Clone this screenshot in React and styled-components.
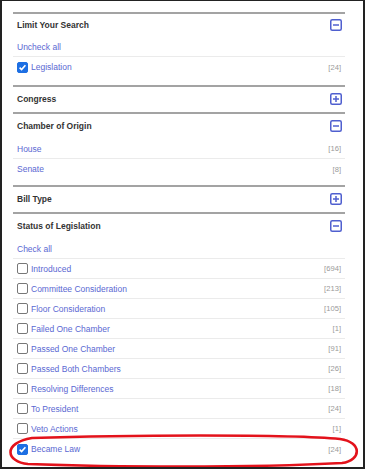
import React from "react";
import styled, { createGlobalStyle } from "styled-components";

const sections = [
  {
    title: "Limit Your Search",
    open: true,
    action: "Uncheck all",
    items: [{ label: "Legislation", count: 24, checked: true }],
    tight: true,
  },
  { title: "Congress", open: false },
  {
    title: "Chamber of Origin",
    open: true,
    items: [
      { label: "House", count: 16 },
      { label: "Senate", count: 8 },
    ],
    plain: true,
  },
  { title: "Bill Type", open: false },
  {
    title: "Status of Legislation",
    open: true,
    action: "Check all",
    items: [
      { label: "Introduced", count: 694 },
      { label: "Committee Consideration", count: 213 },
      { label: "Floor Consideration", count: 105 },
      { label: "Failed One Chamber", count: 1 },
      { label: "Passed One Chamber", count: 91 },
      { label: "Passed Both Chambers", count: 26 },
      { label: "Resolving Differences", count: 18 },
      { label: "To President", count: 24 },
      { label: "Veto Actions", count: 1 },
      { label: "Became Law", count: 24, checked: true },
    ],
  },
];

const ToggleIcon = ({ open }) => (
  <svg width="12" height="12" viewBox="0 0 12 12">
    <rect x="0.75" y="0.75" width="10.5" height="10.5" rx="1.5" fill="#fff" stroke="#4f5fcf" strokeWidth="1.5" />
    <path d="M3 6h6" stroke="#4f5fcf" strokeWidth="1.5" />
    {!open && <path d="M6 3v6" stroke="#4f5fcf" strokeWidth="1.5" />}
  </svg>
);

const App = () => {
  return (
    <>
      <GlobalStyle />
      <Frame>
        <Panel>
          {sections.map((s) => (
            <Section key={s.title}>
              <Header tight={s.tight}>
                <Title>{s.title}</Title>
                <ToggleIcon open={s.open} />
              </Header>
              {s.open && (
                <List tight={s.tight}>
                  {s.action && (
                    <Row>
                      <Link>{s.action}</Link>
                    </Row>
                  )}
                  {s.items.map((it) => (
                    <Row key={it.label}>
                      <Label>
                        {!s.plain && (
                          <Box checked={it.checked}>
                            {it.checked && (
                              <svg width="9" height="9" viewBox="0 0 9 9">
                                <path d="M1.6 4.6l2 2 3.8-4.4" fill="none" stroke="#fff" strokeWidth="1.6" />
                              </svg>
                            )}
                          </Box>
                        )}
                        <Link>{it.label}</Link>
                      </Label>
                      <Count>[{it.count}]</Count>
                    </Row>
                  ))}
                </List>
              )}
            </Section>
          ))}
        </Panel>
        <Mark viewBox="0 0 365 469">
          <path
            d="M32 438 C 120 435 290 434 340 439 C 362 442 362 460 342 463 C 250 468 110 467 28 464 C 6 462 2 443 32 438 Z"
            fill="none"
            stroke="#e3121b"
            strokeWidth="2.6"
          />
        </Mark>
      </Frame>
    </>
  );
};

export default App;

const GlobalStyle = createGlobalStyle`
  body {
    margin: 0;
    background: #fff;
    font-family: "Liberation Sans", Arial, sans-serif;
  }
`;

const Mark = styled.svg`
  position: absolute;
  left: -2px;
  top: -1px;
  width: 365px;
  height: 469px;
  pointer-events: none;
`;

const Count = styled.span`
  font-size: 7.6px;
  color: #9a9a9a;
`;

const Link = styled.span`
  font-size: 8.5px;
  color: #5a68d2;
`;

const Box = styled.span`
  width: 11px;
  height: 11px;
  box-sizing: border-box;
  border-radius: 2px;
  border: 1px solid ${(p) => (p.checked ? "#1d6fe3" : "#777")};
  background: ${(p) => (p.checked ? "#1d6fe3" : "#fff")};
  display: flex;
  align-items: center;
  justify-content: center;
`;

const Label = styled.div`
  display: flex;
  align-items: center;
  gap: 3px;
`;

const Row = styled.div`
  height: 20px;
  box-sizing: border-box;
  display: flex;
  align-items: center;
  justify-content: space-between;
  padding: 0 4px;
  border-bottom: 1px solid #ebebeb;

  &:last-child {
    border-bottom: none;
  }
`;

const List = styled.div`
  padding-bottom: ${(p) => (p.tight ? "8px" : "6px")};
`;

const Title = styled.div`
  font-size: 8.5px;
  font-weight: bold;
  color: #333;
`;

const Header = styled.div`
  height: ${(p) => (p.tight ? "23px" : "25px")};
  box-sizing: border-box;
  display: flex;
  align-items: center;
  justify-content: space-between;
  padding: 0 3px 1px 4px;
`;

const Section = styled.div`
  border-top: 2px solid #a3a3a3;
`;

const Panel = styled.div`
  display: flex;
  flex-direction: column;
`;

const Frame = styled.div`
  position: relative;
  width: 365px;
  height: 469px;
  box-sizing: border-box;
  border-style: solid;
  border-color: #222;
  border-width: 1px 2px 2px 2px;
  padding: 11px 18px 0 11px;
  overflow: hidden;
`;
